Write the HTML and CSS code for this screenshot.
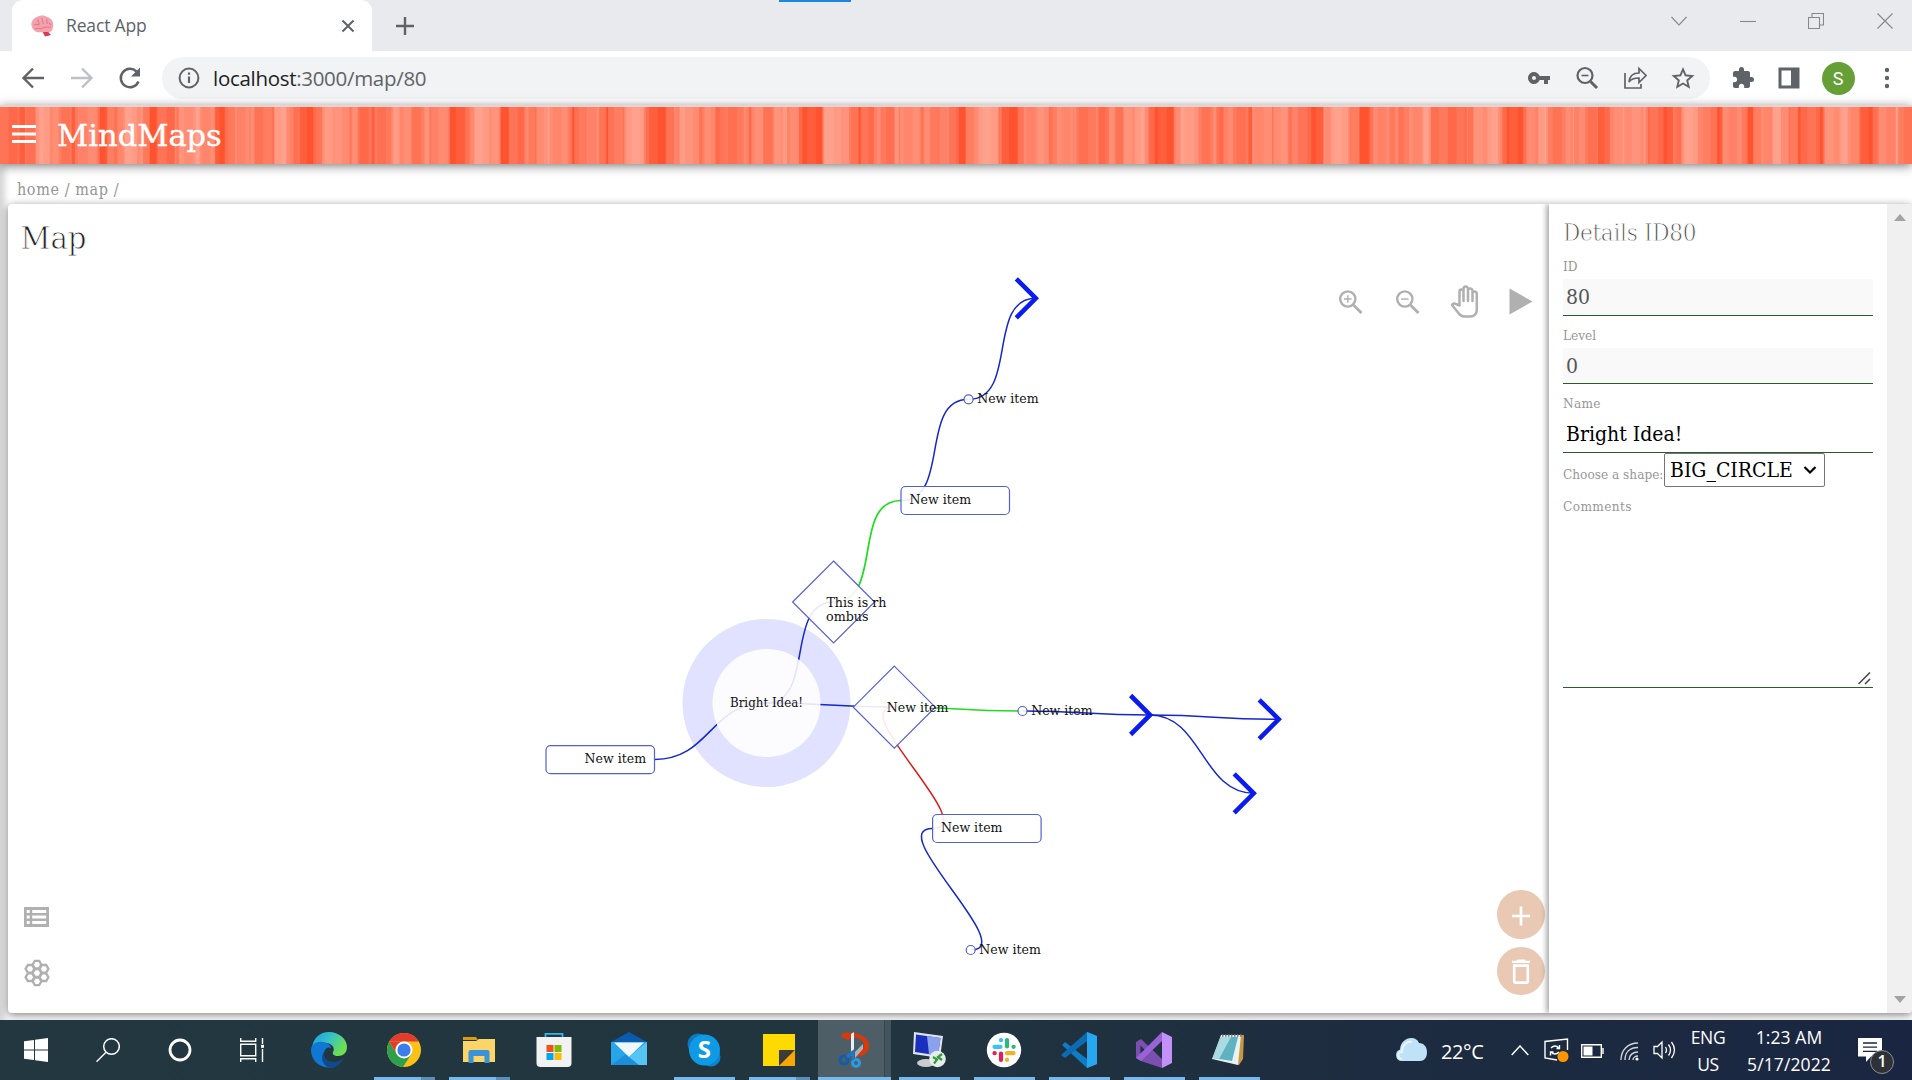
FILE: index.html
```html
<!DOCTYPE html>
<html lang="en">
<head>
<meta charset="utf-8">
<title>React App</title>
<link rel="stylesheet" href="styles.css">
</head>
<body>
<div class="screen">
  <header class="tabstrip">
    <div class="tab">
      <svg class="favicon" viewBox="0 0 24 22" width="24" height="22">
        <path d="M2 12C0 8 3 3 7 2c3-2 8-2 10 0 5 1 7 6 6 10 0 3-2 5-4 5l1 3-5 1-3-4c-5 1-9-1-10-5z" fill="#f4a3ae"/>
        <path d="M4 10c2-2 3 1 5-1M8 4c-1 3 2 3 1 6M12 3c-1 3 2 3 1 6M17 4c-1 3 1 3 0 5M5 14c3-2 5 1 8-1s5 0 8-1M19 8l2 2" fill="none" stroke="#e27d8e" stroke-width="1.2"/>
        <path d="M13 17l5 0 3 3-6 1.5z" fill="#d83a56"/>
      </svg>
      <span class="tab-title">React App</span>
      <svg class="tab-close" viewBox="0 0 14 14" width="14" height="14"><path d="M1.5 1.5l11 11M12.500 1.500l-11 11" stroke="#5f6368" stroke-width="2"/></svg>
    </div>
    <svg class="new-tab" viewBox="0 0 18 18" width="18" height="18"><path d="M9 0v18M0 9h18" stroke="#5f6368" stroke-width="2.400"/></svg>
    <div class="load-line"></div>
    <div class="window-controls">
      <svg viewBox="0 0 16 16"><path d="M.5 4l7.500 8 7.500-8" /></svg>
      <svg viewBox="0 0 16 16"><path d="M0 8.500h16"/></svg>
      <svg viewBox="0 0 16 16"><path d="M.5 4.500h11v11H.5zM4 4.500V.5h11.500v11.500h-4"/></svg>
      <svg viewBox="0 0 16 16"><path d="M.5.5l15 15M15.500.5l-15 15"/></svg>
    </div>
  </header>

  <div class="toolbar">
    <div class="nav">
      <svg viewBox="0 0 24 24"><path d="M23 12H3M12 2.500L2.500 12l9.500 9.500" fill="none" stroke="#5f6368" stroke-width="2.400"/></svg>
      <svg viewBox="0 0 24 24"><path d="M1 12h20M12 2.500l9.500 9.500-9.500 9.500" fill="none" stroke="#bdc1c6" stroke-width="2.400"/></svg>
      <svg viewBox="0 0 24 24"><path d="M20.500 15.500A9.200 9.200 0 1 1 18.500 5.500" fill="none" stroke="#5f6368" stroke-width="2.500"/><path d="M22 1.500v9h-9z" fill="#5f6368"/></svg>
    </div>
    <div class="omnibox">
      <svg viewBox="0 0 22 22" width="22" height="22"><circle cx="11" cy="11" r="9.400" fill="none" stroke="#5f6368" stroke-width="2"/><path d="M11 9.500V16M11 5.500v2.300" stroke="#5f6368" stroke-width="2.200"/></svg>
      <span class="url"><b>localhost</b>:3000/map/80</span>
      <div class="omni-icons">
        <svg viewBox="0 0 24 24"><path d="M12.650 10C11.830 7.670 9.610 6 7 6c-3.310 0-6 2.690-6 6s2.690 6 6 6c2.610 0 4.830-1.670 5.650-4H17v4h4v-4h2v-4H12.650zM7 14c-1.100 0-2-.9-2-2s.9-2 2-2 2 .9 2 2-.9 2-2 2z" fill="#5f6368"/></svg>
        <svg viewBox="0 0 24 24"><circle cx="10" cy="9.500" r="7.500" fill="none" stroke="#5f6368" stroke-width="2.200"/><path d="M15.500 15.500L22 22" stroke="#5f6368" stroke-width="3"/><path d="M6.500 9.500h7" stroke="#5f6368" stroke-width="1.600"/></svg>
        <svg viewBox="0 0 24 24" fill="none" stroke="#5f6368" stroke-width="1.700"><path d="M2 7v15h16v-4"/><path d="M6 16c.5-6 4-9 10-9V2.500l7 7-7 7V12c-5 0-8 1-10 4z"/></svg>
        <svg viewBox="0 0 24 24"><path d="M22 9.240l-7.190-.62L12 2 9.190 8.630 2 9.240l5.460 4.730L5.820 21 12 17.270 18.180 21l-1.630-7.030L22 9.240zM12 15.400l-3.760 2.270 1-4.280-3.320-2.880 4.380-.38L12 6.100l1.710 4.040 4.380.38-3.320 2.880 1 4.280L12 15.400z" fill="#5f6368" transform="translate(-1.800 -1.300) scale(1.15)"/></svg>
      </div>
    </div>
    <div class="ext">
      <svg viewBox="0 0 24 24"><path d="M20.500 11H19V7c0-1.100-.9-2-2-2h-4V3.500a2.500 2.500 0 0 0-5 0V5H4c-1.100 0-1.990.9-1.990 2v3.800H3.500c1.490 0 2.700 1.210 2.700 2.700s-1.210 2.700-2.700 2.700H2V20c0 1.100.9 2 2 2h3.800v-1.500c0-1.490 1.210-2.700 2.700-2.700s2.700 1.210 2.700 2.700V22H17c1.100 0 2-.9 2-2v-4h1.500a2.500 2.500 0 0 0 0-5z" fill="#5f6368"/></svg>
      <svg viewBox="0 0 24 24"><path d="M1.500 1.500h21v21h-21z" fill="#5f6368"/><path d="M4.500 4.500h9.500v15H4.500z" fill="#fff"/></svg>
      <span class="avatar">S</span>
      <svg viewBox="0 0 24 24"><circle cx="12" cy="4" r="2.200" fill="#5f6368"/><circle cx="12" cy="12" r="2.200" fill="#5f6368"/><circle cx="12" cy="20" r="2.200" fill="#5f6368"/></svg>
    </div>
  </div>

  <div class="app-header">
    <svg viewBox="0 0 24 18" width="24" height="18"><path d="M0 1.500h24M0 9h24M0 16.500h24" stroke="#fff" stroke-width="2.800"/></svg>
    <span class="brand">MindMaps</span>
  </div>

  <div class="page">
    <nav class="crumbs"><span>home / map /</span></nav>
    <div class="panel">
      <main class="map">
        <h1><span>Map</span></h1>
        <svg class="graph" viewBox="8 204 1541 809" width="1541" height="809">
          <circle cx="766.500" cy="703" r="84" fill="#e0e2ff"/>
          <g class="links">
            <path d="M766 703C816 703 784 602 834 602"/>
            <path class="go" d="M834 602C884 602 851 500.500 901 500.500"/>
            <path d="M901 500.500C951 500.500 918.600 399.300 968.600 399.300"/>
            <path d="M968.600 399.300C1018.600 399.300 986 298.300 1036 298.300"/>
            <path d="M766 703C710 703 710 759.500 654.600 759.500"/>
            <path d="M766 703C830 703 830 707 894.300 707"/>
            <path class="go" d="M894.300 707C958 707 958 711 1022.500 711"/>
            <path d="M1022.500 711C1086 711 1086 715 1150 715"/>
            <path d="M1150 715C1214 715 1214 719.300 1278 719.300"/>
            <path d="M1150 715C1202 715 1202 793.300 1254 793.300"/>
            <path class="stop" d="M894 707C844 707 982.500 828.500 932.500 828.500"/>
            <path d="M932.500 828.500C882.500 828.500 1020.700 950 970.700 950"/>
          </g>
          <circle cx="766.500" cy="703" r="54" fill="#fff" fill-opacity=".88"/>
          <g class="shapes">
            <path d="M833.600 561l41 41-41 41-41-41z"/>
            <path d="M894.300 666.200l41 41-41 41-41-41z"/>
            <rect x="901" y="486.500" width="108.500" height="28" rx="4.500"/>
            <rect x="546" y="745.700" width="108.500" height="28" rx="4.500"/>
            <rect x="932.600" y="814.500" width="108.500" height="28" rx="4.500"/>
            <circle cx="968.600" cy="399.300" r="4.500"/>
            <circle cx="1022.500" cy="711" r="4.500"/>
            <circle cx="970.700" cy="950" r="4.500"/>
          </g>
          <g class="arrows">
            <path d="M1016.300 278.800l19.500 19.500-19.500 19.500"/>
            <path d="M1130.600 695.500l19.500 19.500-19.500 19.500"/>
            <path d="M1259.200 699.800l19.500 19.500-19.500 19.500"/>
            <path d="M1234.200 773.800l19.500 19.500-19.500 19.500"/>
          </g>
          <g class="labels">
            <text x="730" y="707" textLength="73" lengthAdjust="spacingAndGlyphs">Bright Idea!</text>
            <text x="584.600" y="763" textLength="61.500" lengthAdjust="spacingAndGlyphs">New item</text>
            <text x="826.400" y="607" textLength="60" lengthAdjust="spacingAndGlyphs">This is rh</text>
            <text x="826" y="621" textLength="42.500" lengthAdjust="spacingAndGlyphs">ombus</text>
            <text x="886.800" y="712" textLength="61.500" lengthAdjust="spacingAndGlyphs">New item</text>
            <text x="941" y="832" textLength="61.500" lengthAdjust="spacingAndGlyphs">New item</text>
            <text x="979.300" y="954" textLength="61.500" lengthAdjust="spacingAndGlyphs">New item</text>
            <text x="1031.200" y="715" textLength="61.500" lengthAdjust="spacingAndGlyphs">New item</text>
            <text x="977.200" y="403" textLength="61.500" lengthAdjust="spacingAndGlyphs">New item</text>
            <text x="909.600" y="504" textLength="61.500" lengthAdjust="spacingAndGlyphs">New item</text>
          </g>
        </svg>
        <div class="map-tools">
          <svg viewBox="0 0 24 24" fill="none" stroke="#b0b0b0"><circle cx="8.800" cy="9" r="7.600" stroke-width="2.400"/><path d="M14.500 15l8 8" stroke-width="2.900"/><path d="M5 9h7.600M8.800 5.200v7.600" stroke-width="1.400"/></svg>
          <svg viewBox="0 0 24 24" fill="none" stroke="#b0b0b0"><circle cx="8.800" cy="9" r="7.600" stroke-width="2.400"/><path d="M14.500 15l8 8" stroke-width="2.900"/><path d="M5 9h7.600" stroke-width="1.400"/></svg>
          <svg class="hand" viewBox="0 0 29 33" fill="none" stroke="#b0b0b0" stroke-width="2.500" stroke-linejoin="round" stroke-linecap="round"><path d="M9.500 20.500V6.500q0-2 2-2t2 2V4q0-2.500 2-2.500t2.500 2V5q0-1.500 2-1.500t2.500 2V8q0-1.500 2-1.500t2.300 2V24q0 7-6 7.500h-6q-4 0-6-3L2 20q1.500-2.500 4-1zM13.500 6.500V16M18 4.500V16M22.500 7V16"/></svg>
          <svg class="play" viewBox="0 0 24 27"><path d="M.5.500v26L23.500 13.500z" fill="#b0b0b0"/></svg>
        </div>
        <div class="side-tools">
          <svg viewBox="0 0 25 20" width="25" height="20"><path d="M0 0h25v20H0z" fill="#b0b0b0"/><path d="M2.700 3h3v3h-3zM2.700 8.500h3v3h-3zM2.700 14h3v3h-3zM8.200 3h14v3h-14zM8.200 8.500h14v3h-14zM8.200 14h14v3h-14z" fill="#fff"/></svg>
          <svg viewBox="0 0 26 28" width="26" height="28" fill="none" stroke="#b0b0b0" stroke-width="2.300"><path id="h" d="M10.800 10.200h4.400l2.200 3.800-2.200 3.800h-4.400L8.600 14z"/><use href="#h" y="-8.300"/><use href="#h" y="8.300"/><use href="#h" x="-7" y="-4.200"/><use href="#h" x="7" y="-4.200"/><use href="#h" x="-7" y="4.200"/><use href="#h" x="7" y="4.200"/></svg>
        </div>
        <div class="fabs">
          <span class="fab"><svg viewBox="0 0 24 24" width="24" height="24"><path d="M12 2.500v19M3 12h18" stroke="#fff" stroke-width="2.700"/></svg></span>
          <span class="fab"><svg viewBox="0 0 20 26" width="20" height="26"><path d="M1 4h18V1.800h-4.500L13.500.500h-7L5.500 1.800H1z" fill="#fff"/><path d="M3.200 6.600h13.600v15.600q0 1.400-1.400 1.400H4.600q-1.400 0-1.400-1.400z" fill="none" stroke="#fff" stroke-width="2.600"/></svg></span>
        </div>
      </main>
      <aside class="details">
        <h2><span>Details ID80</span></h2>
        <label class="l-id"><span>ID</span></label>
        <div class="field ro"><span>80</span></div>
        <label class="l-level"><span>Level</span></label>
        <div class="field ro level"><span>0</span></div>
        <label class="l-name"><span>Name</span></label>
        <div class="field"><span class="name-value">Bright Idea!</span></div>
        <div class="shape-row">
          <label class="l-shape"><span>Choose a shape:</span></label>
          <div class="select"><span>BIG_CIRCLE</span><svg viewBox="0 0 14 10" width="14" height="10"><path d="M1.500 2l5.500 5.500L12.500 2" fill="none" stroke="#000" stroke-width="2.200"/></svg></div>
        </div>
        <label class="l-comments"><span>Comments</span></label>
        <div class="comments"><svg viewBox="0 0 13 13" width="13" height="13"><path d="M.5 12L12 .5M7 12l5-5" stroke="#444" stroke-width="1.500"/></svg></div>
      </aside>
      <div class="scroll">
        <svg viewBox="0 0 12 7" width="12" height="7"><path d="M0 7l6-7 6 7z" fill="#a3a3a3"/></svg>
        <svg viewBox="0 0 12 7" width="12" height="7"><path d="M0 0l6 7 6-7z" fill="#a3a3a3"/></svg>
      </div>
    </div>
  </div>

  <footer class="taskbar">
    <div class="sys">
      <span><svg viewBox="0 0 24 24" width="24" height="24"><path d="M0 3.300l10-1.400v9.600H0zM11 1.700L24 0v11.500H11zM0 12.500h10v9.600L0 20.700zM11 12.500h13V24l-13-1.700z" fill="#fff"/></svg></span>
      <span><svg viewBox="0 0 24 24" width="24" height="24" fill="none" stroke="#fff" stroke-width="1.500"><circle cx="15.500" cy="8.500" r="7.800"/><path d="M10 14.200L.5 23.700"/></svg></span>
      <span><svg viewBox="0 0 24 24" width="24" height="24"><circle cx="12" cy="12" r="10" fill="none" stroke="#fff" stroke-width="2.800"/></svg></span>
      <span><svg viewBox="0 0 24 24" width="24" height="24" fill="none" stroke="#fff" stroke-width="1.400"><path d="M.7 6.300h15v11.500H.7zM.7 0v3.300h15V0M.7 24v-3.300h15V24M22.500 0v6M22.500 11v13"/><path d="M21 6.800h3v3h-3z" fill="#fff" stroke="none"/></svg></span>
    </div>
    <div class="apps">
      <span><svg viewBox="0 0 36 36"><defs><linearGradient id="eg" x1="0" y1="0" x2="1" y2=".5"><stop offset="0" stop-color="#1b9de2"/><stop offset=".5" stop-color="#35c1c9"/><stop offset="1" stop-color="#6fe04f"/></linearGradient></defs><path d="M1 16C2 6 9 0 18 0c10 0 18 7 18 15 0 6-4 9-9 9-4 0-6-2-5-4 2-3 0-8-6-9C9 10 3 12 1 16z" fill="url(#eg)"/><path d="M0 18c0-6 6-9 12-8 5 1 8 3 8 6-3-2-8 1-7 8 1 7 7 11 11 11C11 38 0 30 0 18z" fill="#0f78d4"/><path d="M13 20c-1 5 3 10 9 10 5 0 9-2 11-4-3 6-8 10-14 10C11 34 9 24 13 20z" fill="#114a8b"/></svg></span>
      <span class="open stack"><svg viewBox="0 0 36 36"><circle cx="18" cy="18" r="17" fill="#fbc116"/><path d="M3.300 9.500A17 17 0 0 1 32.700 9.500H18z" fill="#e33b2e"/><path d="M3.300 9.500A17 17 0 0 0 17 35l8.500-13L18 18 10.500 22z" fill="#2da04c"/><path d="M3.300 9.500L10.600 22A8.500 8.500 0 0 1 18 9.500z" fill="#e33b2e"/><circle cx="18" cy="18" r="8.500" fill="#fff"/><circle cx="18" cy="18" r="6.600" fill="#3b7ded"/></svg></span>
      <span class="open stack"><svg viewBox="0 0 36 36"><path d="M2 5h13l2 3H2z" fill="#d79b16"/><path d="M2 9h13l3-2h16v23H2z" fill="#fbd568"/><path d="M7.500 20q0-2 2-2h17q2 0 2 2v11h-5v-7h-11v7h-5z" fill="#3a92d8"/></svg></span>
      <span><svg viewBox="0 0 36 36"><path d="M9.500 8V1.800h17V8" fill="none" stroke="#35b3ee" stroke-width="1.800"/><path d="M.5 5h35v26q0 4-4 4h-27q-4 0-4-4z" fill="#f2f2f2"/><path d="M10.500 13h7v7h-7z" fill="#f1511b"/><path d="M18.500 13h7v7h-7z" fill="#80bb03"/><path d="M10.500 21h7v7h-7z" fill="#05a6f0"/><path d="M18.500 21h7v7h-7z" fill="#fbbb09"/></svg></span>
      <span><svg viewBox="0 0 36 36"><path d="M0 10L18 0l18 10v3H0z" fill="#0a5bb0"/><path d="M0 10h36v23H0z" fill="#27a5ea"/><path d="M0 33h36L18 20z" fill="#1b8fdc"/><path d="M3 10.500h30L18 25z" fill="#f1f6fb"/><path d="M18 25L36 10v23H28z" fill="#55c5f4"/></svg></span>
      <span class="open"><svg viewBox="0 0 36 36"><circle cx="12" cy="12" r="10.500" fill="#0f78bd"/><circle cx="25" cy="25" r="9.500" fill="#0a84d4"/><circle cx="18.500" cy="18" r="15.500" fill="#0f9ae6"/><text x="18.300" y="26" class="skype">S</text></svg></span>
      <span class="open stack"><svg viewBox="0 0 36 36"><path d="M2 2h32v16L18 34H2z" fill="#ffda00"/><path d="M18 34V18h16z" fill="#3c3c3c"/><path d="M18 34h16V18z" fill="#f5a800"/></svg></span>
      <span class="open active"><svg viewBox="0 0 36 36"><path d="M7 1c8-2 22 1 25 8 4 11-4 16-14 16l1-4c7-1 11-5 8-11C24 5 16 4 12 8L5 5z" fill="#d8390b"/><path d="M15 2l3-2v22l-3 2z" fill="#e8eef2"/><path d="M19 20L27 12v5l-8 9z" fill="#a9b4ba"/><circle cx="8" cy="28" r="4" fill="none" stroke="#145ca8" stroke-width="3"/><circle cx="20" cy="31" r="3.500" fill="none" stroke="#2d9be4" stroke-width="3"/><path d="M11 25l6-5v8" fill="none" stroke="#1c76c4" stroke-width="3"/></svg></span>
      <span class="open"><svg viewBox="0 0 36 36"><ellipse cx="15" cy="31" rx="9" ry="4" fill="#c9ccd0"/><path d="M3 0l29 4-3 22L2 22z" fill="#dfe3ea"/><path d="M5 2.500L29.500 6 27 23.500 4 20z" fill="#1b2fbf"/><path d="M16 4l13.500 2L27 23.500l-9-1.500z" fill="#8aa2ee"/><circle cx="26.500" cy="27" r="8.300" fill="#e9ece9"/><path d="M22 25l4 2.500-3 4M31 22l-4 3 4 3" stroke="#2f9c3c" stroke-width="2.200" fill="none"/></svg></span>
      <span class="open"><svg viewBox="0 0 36 36"><circle cx="18" cy="18" r="17.200" fill="#fff"/><g stroke-width="4.200" stroke-linecap="round"><path d="M8.500 14.800h6M15 8v.2" stroke="#36c5f0"/><path d="M21 8v6.500M27.500 14.800h.2" stroke="#2eb67d"/><path d="M21 21.200h6.500M21 27.700v.2" stroke="#ecb22e"/><path d="M15 21.500v6.500M8.500 21.200h.2" stroke="#e01e5a"/></g></svg></span>
      <span class="open"><svg viewBox="0 0 36 36"><path d="M26 0l10 4v28l-10 4L1 13l3-3 22 17z" fill="#0f7cc4"/><path d="M26 0v9L4 26l-4-3z" fill="#0b6bb3"/><path d="M26 0l10 4v28l-10 4z" fill="#27a7f0"/></svg></span>
      <span class="open"><svg viewBox="0 0 36 36"><path d="M0 10l5-3 21 20v9L5 29 0 26zM4.500 13.500v9L9 18z" fill="#7a4fb0" fill-rule="evenodd"/><path d="M26 0v9L5 29l-5-3z" fill="#9a62d6"/><path d="M26 0l10 5v26l-10 5z" fill="#c390fa"/></svg></span>
      <span class="open"><svg viewBox="0 0 36 36"><path d="M11 3h22l-1 24-4 6-4-1z" fill="#c9973f"/><path d="M10 3h20l-3 30L1 27z" fill="#e8f1f3"/><path d="M10 5h17l-6 24L2 26z" fill="#5fb3c0"/><path d="M10 5h10L8 27l-6-1z" fill="#a9dbe2"/><path d="M11 3.500h20" stroke="#777" stroke-width="2.500" stroke-dasharray="1.500 1.500"/></svg></span>
    </div>
    <div class="tray">
      <svg class="cloud" viewBox="0 0 32 24" width="32" height="24"><path d="M6 23a6 6 0 0 1-1-11.500C5.500 4 11 0 16 0c4 0 7 2 8 5 5 0 8 4 8 9 0 6-3 9-7 9z" fill="#bfe2f8"/><path d="M7 21c-5-1-5-7 0-7 0-7 5-11 10-10" fill="none" stroke="#e9f6fe" stroke-width="2"/></svg>
      <span class="temp">22°C</span>
      <svg class="up" viewBox="0 0 18 11" width="18" height="11"><path d="M.7 10L9 1l8.300 9" fill="none" stroke="#fff" stroke-width="1.500"/></svg>
      <svg class="upd" viewBox="0 0 25 24" width="25" height="24" fill="none" stroke="#fff" stroke-width="1.400"><path d="M13 22L1 20V3.500L23.500 1v11"/><path d="M7 10q4-4 8 0M15.500 7v3.500h-3M15 14q-4 4-8 0M6.500 17.500V14h3"/><circle cx="19" cy="18.500" r="5.500" fill="#ff9500" stroke="none"/></svg>
      <svg class="bat" viewBox="0 0 23 14" width="23" height="14"><path d="M.7.7h19.600v12.600H.7zM22 4v6" fill="none" stroke="#fff" stroke-width="1.400"/><path d="M2.500 2.500h9v9h-9z" fill="#fff"/></svg>
      <svg class="wifi" viewBox="0 0 19 19" width="19" height="19" fill="none" stroke="#cfd6dd" stroke-width="1.400"><path d="M1 18C1 8 8 1 18 1M5 18C5 10 10 5.500 18 5.500M9 18c0-5 4-8 9-8M13 18c0-2 2-4 5-4"/><circle cx="17" cy="17" r="1.600" fill="#fff" stroke="none"/></svg>
      <svg class="vol" viewBox="0 0 23 20" width="23" height="20" fill="none" stroke="#fff" stroke-width="1.300"><path d="M1 6.500h3.500L9 2v16l-4.500-4.500H1zM12.500 7q2 3 0 6M15.500 4.500q4 5.500 0 11M18.500 2q6 8 0 16"/></svg>
      <div class="two lang"><span>ENG</span><span>US</span></div>
      <div class="two clock"><span>1:23 AM</span><span>5/17/2022</span></div>
      <div class="note"><svg viewBox="0 0 24 24" width="24" height="24"><path d="M0 0h24v18.500H13L8 24v-5.500H0z" fill="#fff"/><path d="M5 5h14M5 9.200h14M5 13.400h14" stroke="#1b2740" stroke-width="1.300"/></svg><span class="badge">1</span></div>
    </div>
  </footer>
</div>
</body>
</html>
```
FILE: styles.css
```css
* { box-sizing: border-box; }
body { margin: 0; background: #fff; overflow: hidden; }
svg { display: block; flex: none; }
.screen {
  width: 1912px; height: 1080px; display: flex; flex-direction: column;
  font-family: "Open Sans", "Noto Sans", sans-serif;
}

/* browser chrome */
.tabstrip { position: relative; height: 51px; background: #e8eaed; display: flex; padding-left: 12px; align-items: flex-start; }
.tab { width: 360px; height: 51px; background: #fff; border-radius: 11px 11px 0 0; display: flex; align-items: center; padding: 0 17px 0 18px; }
.tab-title { margin-left: 12px; font-size: 17.5px; color: #5f6368; letter-spacing: -.15px; line-height: 24px; padding-bottom: 1px; }
.tab-close { margin-left: auto; }
.new-tab { margin: 17px 0 0 24px; }
.load-line { position: absolute; left: 779px; top: 0; width: 72px; height: 2px; background: #1a86e0; }
.window-controls { margin: 13px 19px 0 auto; display: flex; gap: 52.700px; }
.window-controls svg { width: 16px; height: 16px; fill: none; stroke: #85888c; stroke-width: 1.100; }
.toolbar { height: 54px; background: #fff; display: flex; align-items: center; padding: 0 13px 0 20px; }
.nav { display: flex; gap: 24.500px; width: 142px; padding-left: 1px; }
.nav svg { width: 24px; height: 24px; }
.omnibox { width: 1548px; height: 42px; border-radius: 21px; background: #f1f3f4; display: flex; align-items: center; padding: 0 15px 0 16px; }
.url { margin-left: 13px; font-size: 20.500px; line-height: 28px; color: #5f6368; letter-spacing: -.3px; }
.url b { font-weight: 400; color: #202124; }
.omni-icons { margin-left: auto; display: flex; gap: 24px; }
.omni-icons svg, .ext svg { width: 24px; height: 24px; }
.ext { flex: 1; display: flex; align-items: center; justify-content: space-between; padding-left: 21px; }
.avatar { width: 33px; height: 33px; border-radius: 50%; background: #659f35; color: #fff; font: 18px/33px Roboto, sans-serif; text-align: center; margin: 0 -2px; }

/* application header with overlapping stripe tiles */
.app-header {
  position: relative; z-index: 2; height: 59px; display: flex; align-items: center; padding: 0 0 0 12px;
  border-top: 2px solid #e6d4d2;
  background-color: #ff522e;
  background-image:
    linear-gradient(90deg, rgba(255,255,255,.07) 50%, transparent 50%),
    linear-gradient(90deg, rgba(255,255,255,.13) 50%, transparent 50%),
    linear-gradient(90deg, transparent 50%, rgba(255,255,255,.17) 50%),
    linear-gradient(90deg, transparent 50%, rgba(255,255,255,.19) 50%);
  background-size: 17.550px 100%, 39.150px 100%, 49.950px 100%, 71.550px 100%;
  box-shadow: 0 2px 10px rgba(0,0,0,.5);
}
.app-header svg { margin-top: -3px; }
.brand { margin-left: 21px; color: #fff; font: 30.500px/40px "DejaVu Serif", serif; -webkit-text-stroke: .4px #fff; }

.page { height: 856px; padding: 0 0 7px 8px; background: #fff; box-shadow: inset 8px 0 6px -3px #d6d6d6; overflow: hidden; font-family: "DejaVu Serif Condensed", "DejaVu Serif", serif; }
.crumbs { height: 40px; padding-left: 9px; font-size: 16px; line-height: 51px; color: #959595; letter-spacing: .6px; }
.panel { height: 809px; display: flex; background: #fff; border-radius: 4px; box-shadow: 0 2px 8px rgba(0,0,0,.5); }
.map { position: relative; width: 1541px; height: 809px; }
h1, h2 { margin: 0; font-weight: 400; -webkit-text-stroke: .8px #fff; }
h1 { font-size: 32.500px; line-height: 40px; padding: 14px 0 0 12.500px; color: #222; }
.graph { position: absolute; left: 0; top: 0; }
.links path { fill: none; stroke: #1527c8; stroke-width: 1.500; }
.links .go { stroke: #1fdc1f; stroke-width: 1.700; }
.links .stop { stroke: #dc1c1c; }
.shapes { fill: #fff; fill-opacity: .9; stroke: #5560d0; stroke-width: 1.200; }
.arrows { fill: none; stroke: #0b1cf0; stroke-width: 4.600; }
.labels { font-size: 13.500px; fill: #111; }
.map-tools { position: absolute; right: 16px; top: 81px; display: flex; gap: 32px; align-items: center; }
.map-tools svg { width: 24px; height: 24px; }
.map-tools svg:first-child { margin-right: 1px; }
.map-tools .hand { width: 29px; height: 33px; margin-left: -2px; }
.map-tools .play { width: 24px; height: 27px; margin-left: -2px; }
.side-tools { position: absolute; left: 16px; bottom: 26px; display: flex; flex-direction: column; gap: 32px; }
.fabs { position: absolute; right: 4px; bottom: 18px; display: flex; flex-direction: column; gap: 8px; }
.fab { width: 48px; height: 48.500px; border-radius: 50%; background: #e9c9b4; display: flex; align-items: center; justify-content: center; padding-top: 3px; }

/* details column */
.details { position: relative; width: 338px; padding: 0 14px; background: #fff; box-shadow: -2px 0 6px rgba(0,0,0,.4); clip-path: inset(0 0 0 -12px); }
h2 { height: 46px; font-size: 24px; line-height: 58px; color: #444; letter-spacing: -.3px; }
label { display: block; color: #979797; font-size: 13.500px; line-height: 20px; }
.l-id { height: 29px; padding-top: 6px; }
.l-level { height: 32px; padding-top: 9px; }
.l-name { height: 32px; padding-top: 9px; letter-spacing: .3px; }
.field { height: 37px; border-bottom: 1.500px solid #2a5c30; padding-left: 3px; font-size: 21px; line-height: 37px; color: #000; }
.field.level { height: 36px; line-height: 36px; }
.field.ro { background: #f9f9f9; color: #555; }
.shape-row { display: flex; height: 34px; }
.l-shape { width: 101px; padding-top: 11px; white-space: nowrap; }
.select { width: 161px; height: 34px; border: 1px solid #767676; border-radius: 2px; display: flex; align-items: center; justify-content: space-between; padding: 0 7px 0 5px; font-size: 21px; background: #fff; }
.l-comments { height: 40px; padding-top: 9px; letter-spacing: .4px; }
.comments { height: 161px; border-bottom: 1.500px solid #2a5c30; display: flex; align-items: flex-end; justify-content: flex-end; padding: 0 2px 2px; }
.scroll { width: 25px; background: #f0f0f0; display: flex; flex-direction: column; justify-content: space-between; align-items: center; padding: 10px 0; border-radius: 0 4px 4px 0; }

/* taskbar */
.taskbar { position: relative; z-index: 3; height: 60px; display: flex; color: #fff; background: linear-gradient(90deg, #223740 0%, #21353f 45%, #1d2c40 72%, #1a2641 100%); }
.sys { display: flex; }
.sys span { width: 72px; display: flex; align-items: center; justify-content: center; }
.apps { display: flex; margin-left: 3.500px; }
.apps > span { position: relative; width: 75px; display: flex; align-items: center; justify-content: center; }
.apps svg { width: 36px; height: 36px; position: relative; }
.apps .open::after { content: ""; position: absolute; left: 7px; right: 7px; bottom: 0; height: 3px; background: #76b9ed; }
.apps .stack::after { background: linear-gradient(90deg, #76b9ed 77%, #5c8fb8 77%); }
.apps .active::before { content: ""; position: absolute; left: 1px; top: 0; width: 73px; height: 60px; background: linear-gradient(90deg, #4d5e67 66px, #35464f 66px, #35464f 67px, #44545c 67px); }
.apps .active::after { left: 1px; right: 1px; }
.skype { font: 700 24px "Open Sans", sans-serif; fill: #fff; text-anchor: middle; }
.tray { margin-left: auto; display: flex; align-items: center; padding-right: 17px; }
.temp { font-size: 20px; margin-left: 14px; width: 56px; letter-spacing: -.4px; line-height: 24px; padding-top: 4px; }
.up { margin: 0 15px 0 14px; }
.upd { margin-right: 12px; }
.bat { margin: 1px 16px 0 0; }
.wifi { margin: 3px 14px 0 0; }
.two { display: flex; flex-direction: column; align-items: center; font-size: 17.500px; line-height: 27px; padding-top: 1px; }
.lang { width: 58px; margin-left: 3px; letter-spacing: -.4px; }
.clock { width: 104px; letter-spacing: .1px; }
.note { position: relative; margin-left: 17px; width: 37px; }
.badge { position: absolute; left: 12px; top: 12px; width: 24px; height: 24px; border: 1.500px solid #8a8f96; border-radius: 50%; background: #2e3238; font-size: 16px; line-height: 21px; font-weight: 600; text-align: center; }
```
